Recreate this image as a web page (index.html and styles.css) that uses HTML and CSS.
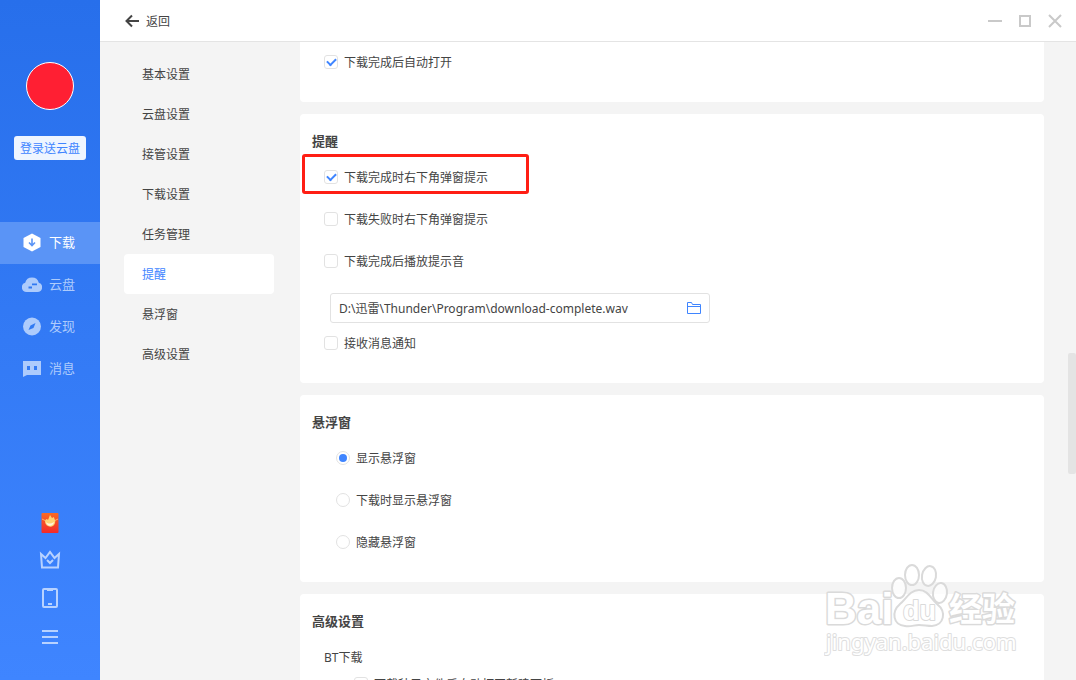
FILE: index.html
```html
<!DOCTYPE html>
<html lang="zh-CN">
<head>
    <meta charset="UTF-8">
    <meta name="viewport" content="width=device-width, initial-scale=1.0">
    <title>设置</title>
    <link rel="stylesheet" href="styles.css">
</head>
<body>
    <div class="app">
        <aside class="sidebar">
            <div class="avatar"></div>
            <button type="button" class="login">登录送云盘</button>
            <nav class="main-nav">
                <a href="#" class="active">
                    <svg width="20" height="20" viewBox="0 0 20 20"><path fill="currentColor" d="M10 .5l8.500 4.500v9L10 18.500 1.500 14V5z"/><path d="M10 5.500v7M7 9.500l3 3 3-3" fill="none" stroke="#5a94f6" stroke-width="1.600"/></svg>
                    <span>下载</span>
                </a>
                <a href="#">
                    <svg width="20" height="20" viewBox="0 0 20 20"><path fill="currentColor" d="M4.500 17a4.700 4.700 0 0 1-1.300-9.200A7 7 0 0 1 16.800 7.800 4.700 4.700 0 0 1 15.500 17z"/><path d="M6.500 12.500h3.500M10 9.300h5" fill="none" stroke="#3079f2" stroke-width="1.800"/></svg>
                    <span>云盘</span>
                </a>
                <a href="#">
                    <svg width="20" height="20" viewBox="0 0 20 20"><circle cx="10" cy="9.500" r="9" fill="currentColor"/><path d="M13.500 6l-2 5-5 2 2-4.500z" fill="#317af3"/></svg>
                    <span>发现</span>
                </a>
                <a href="#">
                    <svg width="20" height="20" viewBox="0 0 20 20"><path fill="currentColor" d="M1 2h18v14H5l-4 2z"/><path d="M5 7h3v4H5zM12 7h3v4h-3z" fill="#337bf4"/></svg>
                    <span>消息</span>
                </a>
            </nav>
            <div class="tools">
                <button type="button" aria-label="红包">
                    <svg width="20" height="22" viewBox="0 0 20 22"><defs><linearGradient id="packet" x2="0" y2="1"><stop offset="0" stop-color="#f96a24"/><stop offset="1" stop-color="#f32a2b"/></linearGradient></defs><rect x="1.500" y="1" width="17" height="20" rx="1" fill="url(#packet)"/><path d="M2 7l4 2M18 7l-4 2" stroke="#ffb067"/><path d="M5 10c0-2 1-3 2-3l1 1 2-5 2 3 2-1c0 2 2 3 1 6-1 5-9 5-10-1z" fill="#ffd374"/><path d="M6 10c2 2 5 2 8 0-1 5-7 5-8 0z" fill="#fff5df"/></svg>
                </button>
                <button type="button" aria-label="会员">
                    <svg width="22" height="22" viewBox="0 0 22 22" fill="none" stroke="currentColor" stroke-width="2"><path d="M2 4l4.500 4L11 2l4.500 6L20 4l-1 13.500H3z"/><path d="M8 10l3 3 3-3"/></svg>
                </button>
                <button type="button" aria-label="手机">
                    <svg width="20" height="22" viewBox="0 0 20 22" fill="none" stroke="currentColor" stroke-width="2"><rect x="3" y="1" width="14" height="18" rx="1"/><path d="M7 2h6M8 16h4"/></svg>
                </button>
                <button type="button" aria-label="菜单">
                    <svg width="20" height="22" viewBox="0 0 20 22" stroke="currentColor" stroke-width="2"><path d="M2 5h16M2 11h16M2 17h16"/></svg>
                </button>
            </div>
        </aside>

        <div class="page">
            <header class="topbar">
                <button type="button" class="back">
                    <svg width="16" height="14" viewBox="0 0 16 14" fill="none" stroke="currentColor" stroke-width="2"><path d="M14 7H2M7 1.500L1.500 7 7 12.500"/></svg>
                    <span>返回</span>
                </button>
                <div class="window-buttons">
                    <button type="button" aria-label="最小化"><svg width="14" height="14" viewBox="0 0 14 14"><path d="M0 7h14"/></svg></button>
                    <button type="button" aria-label="最大化"><svg width="14" height="14" viewBox="0 0 14 14"><path d="M2 2h10v10H2z"/></svg></button>
                    <button type="button" aria-label="关闭"><svg width="14" height="14" viewBox="0 0 14 14"><path d="M1 1l12 12M13 1L1 13"/></svg></button>
                </div>
            </header>

            <div class="content">
                <nav class="settings-nav">
                    <a href="#">基本设置</a>
                    <a href="#">云盘设置</a>
                    <a href="#">接管设置</a>
                    <a href="#">下载设置</a>
                    <a href="#">任务管理</a>
                    <a href="#" class="active">提醒</a>
                    <a href="#">悬浮窗</a>
                    <a href="#">高级设置</a>
                </nav>

                <main class="cards">
                    <section class="card card-first">
                        <label class="option"><input type="checkbox" checked>下载完成后自动打开</label>
                    </section>

                    <section class="card">
                        <h2>提醒</h2>
                        <div class="options">
                            <label class="option marked"><input type="checkbox" checked>下载完成时右下角弹窗提示</label>
                            <label class="option"><input type="checkbox">下载失败时右下角弹窗提示</label>
                            <label class="option"><input type="checkbox">下载完成后播放提示音</label>
                        </div>
                        <div class="path-box">
                            <input type="text" aria-label="提示音文件" value="D:\迅雷\Thunder\Program\download-complete.wav">
                            <button type="button" aria-label="浏览">
                                <svg width="14" height="12" viewBox="0 0 14 12" fill="none" stroke="currentColor"><path d="M.5 11.500V.5h4l1 2h8v9zM.5 4.500h13"/></svg>
                            </button>
                        </div>
                        <label class="option"><input type="checkbox">接收消息通知</label>
                    </section>

                    <section class="card">
                        <h2>悬浮窗</h2>
                        <div class="options indent">
                            <label class="option"><input type="radio" name="float" checked>显示悬浮窗</label>
                            <label class="option"><input type="radio" name="float">下载时显示悬浮窗</label>
                            <label class="option"><input type="radio" name="float">隐藏悬浮窗</label>
                        </div>
                    </section>

                    <section class="card">
                        <h2>高级设置</h2>
                        <h3>BT下载</h3>
                        <label class="option nested"><input type="checkbox">下载种子文件后自动打开新建面板</label>
                    </section>
                </main>
                <div class="scrollbar"></div>
            </div>
        </div>

        <div class="watermark">
            <svg width="200" height="96" viewBox="0 0 200 96">
                <g class="wm-shape">
                    <ellipse cx="75" cy="24" rx="7" ry="10"/>
                    <ellipse cx="88" cy="11" rx="7" ry="10"/>
                    <ellipse cx="105" cy="12" rx="7" ry="10" transform="rotate(10 105 12)"/>
                    <ellipse cx="116" cy="29" rx="7" ry="10" transform="rotate(8 116 29)"/>
                    <path d="M95 26c9 0 12 9 18 14 10 8 7 21-5 22-5 0-8-1-13-1s-8 2-14 1c-12-1-14-14-5-22 6-5 10-14 19-14z"/>
                </g>
                <text class="wm-text wm-bai" x="1" y="60">Bai</text>
                <text class="wm-text wm-du" x="79" y="56">du</text>
                <text class="wm-text wm-cn" x="125" y="57">经验</text>
                <text class="wm-text wm-url" x="2" y="86">jingyan.baidu.com</text>
            </svg>
        </div>
    </div>
</body>
</html>
```
FILE: styles.css
```css
*,
*::before,
*::after {
    box-sizing: border-box;
}
body {
    margin: 0;
    font-family: "Noto Sans", "Noto Sans CJK SC", sans-serif;
    font-size: 12px;
    line-height: 18px;
    color: #444;
}
a {
    color: inherit;
    text-decoration: none;
}
button {
    padding: 0;
    border: none;
    background: none;
    font: inherit;
    color: inherit;
    cursor: pointer;
}
svg {
    display: block;
    flex: none;
}
.app {
    position: relative;
    display: flex;
    height: 100vh;
    overflow: hidden;
}

/* left sidebar */
.sidebar {
    display: flex;
    flex-direction: column;
    align-items: center;
    flex: none;
    width: 100px;
    padding: 62px 0 32px;
    background: linear-gradient(#276feb, #3f85ff);
}
.avatar {
    width: 48px;
    height: 48px;
    border: 1px solid #fff;
    border-radius: 50%;
    background: #ff1f33;
}
.login {
    width: 72px;
    height: 24px;
    margin: 26px 0 62px;
    padding-top: 2px;
    border-radius: 3px;
    background: #eef5ff;
    color: #3f85ff;
}
.main-nav {
    width: 100%;
}
.main-nav a {
    display: flex;
    align-items: center;
    gap: 7px;
    height: 42px;
    padding-left: 22px;
    font-size: 13px;
    color: #adcbfc;
}
.main-nav span {
    padding-bottom: 2px;
}
.main-nav .active {
    background: #5a94f6;
    color: #fff;
}
.tools {
    display: flex;
    flex-direction: column;
    align-items: center;
    gap: 16px;
    margin-top: auto;
    color: #b8d2ff;
}

/* top bar */
.page {
    display: flex;
    flex-direction: column;
    flex: 1;
    min-width: 0;
    background: #f4f4f4;
}
.topbar {
    display: flex;
    align-items: center;
    justify-content: space-between;
    flex: none;
    height: 42px;
    padding: 0 14px 0 25px;
    border-bottom: 1px solid #e4e4e4;
    background: #fff;
}
.back {
    display: flex;
    align-items: center;
    gap: 5px;
}
.back span {
    padding-top: 2px;
}
.window-buttons {
    display: flex;
    gap: 16px;
}
.window-buttons svg {
    fill: none;
    stroke: #c9c9c9;
    stroke-width: 2;
}

/* settings */
.content {
    position: relative;
    display: flex;
    flex: 1;
    min-height: 0;
    padding: 0 32px 0 24px;
    overflow: hidden;
}
.settings-nav {
    flex: none;
    width: 150px;
    margin: 12px 26px 0 0;
}
.settings-nav a {
    display: block;
    padding: 12px 18px 10px;
    border-radius: 4px;
}
.settings-nav .active {
    background: #fff;
    color: #3f85ff;
}
.cards {
    display: flex;
    flex-direction: column;
    gap: 12px;
    flex: 1;
}
.card {
    flex: none;
    padding: 17px 12px 30px;
    border-radius: 4px;
    background: #fff;
}
.card-first {
    padding-top: 12px;
    border-radius: 0 0 4px 4px;
}
.card h2 {
    margin: 0 0 18px;
    font-size: 13px;
    line-height: 20px;
}
.card h3 {
    margin: 0 0 9px;
    padding-left: 12px;
    font-size: 12px;
    font-weight: normal;
}
.options {
    display: flex;
    flex-direction: column;
    gap: 24px;
}
.options.indent {
    padding-left: 12px;
}
.option {
    position: relative;
    display: flex;
    align-items: center;
    gap: 6px;
    padding-left: 12px;
}
.option.nested {
    padding-left: 42px;
}
.option input {
    display: grid;
    place-items: center;
    width: 14px;
    height: 14px;
    margin: 0 0 2px;
    border: 1px solid #e2e2e2;
    border-radius: 3px;
    background: #fff;
    appearance: none;
}
.option input[type="radio"] {
    border-radius: 50%;
}
.option input[type="checkbox"]:checked::before {
    content: "";
    width: 9px;
    height: 6px;
    margin-bottom: 3px;
    border: solid #3f85ff;
    border-width: 0 0 2px 2px;
    transform: rotate(-45deg);
}
.option input[type="radio"]:checked::before {
    content: "";
    width: 8px;
    height: 8px;
    border-radius: 50%;
    background: #3f85ff;
}
.marked::after {
    content: "";
    position: absolute;
    top: -15px;
    left: -10px;
    width: 227px;
    height: 40px;
    border: 3px solid #ff1e14;
    border-radius: 3px;
}
.path-box {
    display: flex;
    align-items: center;
    width: 380px;
    height: 30px;
    margin: 22px 0 12px 18px;
    padding: 0 8px;
    border: 1px solid #e2e2e2;
    border-radius: 3px;
}
.path-box input {
    flex: 1;
    min-width: 0;
    padding: 2px 0 0;
    border: none;
    background: none;
    font: inherit;
    color: inherit;
    outline: none;
}
.path-box button {
    color: #3f85ff;
}
.scrollbar {
    position: absolute;
    top: 311px;
    right: 0;
    width: 8px;
    height: 121px;
    border-radius: 2px;
    background: #e4e4e4;
}

/* watermark */
.watermark {
    position: absolute;
    right: 52px;
    bottom: 20px;
    pointer-events: none;
}
.wm-shape,
.wm-text {
    fill: #fff;
    fill-opacity: 0.7;
    stroke: #dadada;
    stroke-width: 2;
    stroke-linejoin: round;
}
.wm-text {
    paint-order: stroke;
    fill-opacity: 1;
    font-family: "Liberation Sans", "Noto Sans CJK SC", sans-serif;
    font-weight: bold;
}
.wm-bai {
    font-size: 44px;
    stroke-width: 3;
}
.wm-du {
    font-size: 27px;
}
.wm-cn {
    font-size: 33px;
    stroke-width: 3;
}
.wm-url {
    font-family: "Noto Sans", sans-serif;
    font-size: 22px;
    font-weight: normal;
    stroke: #dedede;
}
```
